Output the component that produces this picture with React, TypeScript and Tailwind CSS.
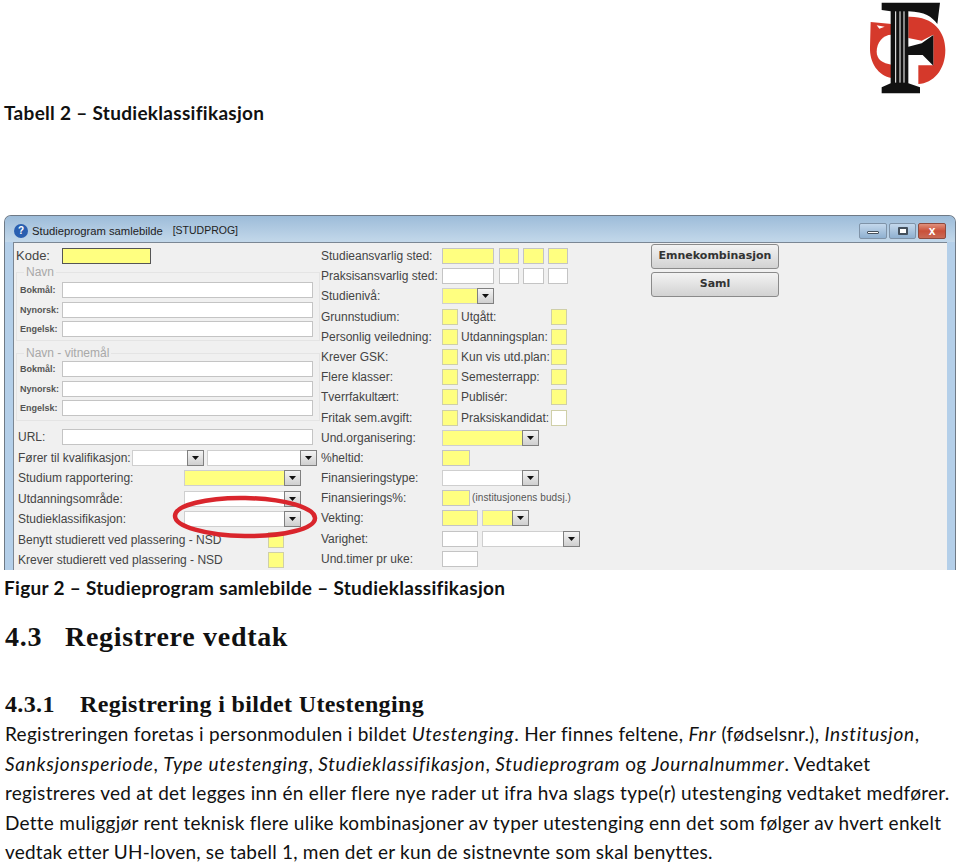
const label = "font-['Liberation_Sans',Arial,sans-serif] text-[12px] leading-4 text-[#444] whitespace-nowrap";
const small = "font-['Liberation_Sans',Arial,sans-serif] text-[9px] font-bold leading-4 text-[#555] whitespace-nowrap";

function Field({ w, yellow }: { w: string; yellow?: boolean }) {
  return <div className={`h-full shrink-0 border border-[#c4c4c4] ${w} ${yellow ? "bg-[#ffff80]" : "bg-white"}`} />;
}

function Check({ yellow = true }: { yellow?: boolean }) {
  return <div className={`h-full w-4 shrink-0 border border-[#cfcfa8] ${yellow ? "bg-[#ffff80]" : "bg-white"}`} />;
}

function Combo({ w, yellow }: { w: string; yellow?: boolean }) {
  return (
    <div className={`flex h-full shrink-0 ${w} ${yellow ? "bg-[#ffff80]" : "bg-white"} border border-[#cfcfcf]`}>
      <div className="flex-1" />
      <div className="-m-px flex w-[17px] items-center justify-center border border-[#808080] bg-gradient-to-b from-[#f4f4f4] to-[#cfcfcf]">
        <svg width="7" height="4" viewBox="0 0 7 4"><path d="M0 0h7L3.5 4z" fill="#111" /></svg>
      </div>
    </div>
  );
}

function Row({ name, children, w }: { name: string; children?: React.ReactNode; w: string }) {
  return (
    <div className="flex h-4 items-center">
      <div className={`${w} shrink-0 ${label}`}>{name}</div>
      {children}
    </div>
  );
}

function NameRow({ name }: { name: string }) {
  return (
    <div className="flex h-4">
      <div className={`w-[42px] shrink-0 ${small}`}>{name}</div>
      <Field w="w-[251px]" />
    </div>
  );
}

function Group({ title, className, children }: { title: string; className: string; children: React.ReactNode }) {
  return (
    <div className={`relative ml-[2px] w-[304px] border border-[#e4e4e4] pl-[3px] ${className}`}>
      <div className="absolute -top-[9px] left-[7px] bg-[#f0f0f0] px-[2px] font-['Liberation_Sans',Arial,sans-serif] text-[12px] leading-4 text-[#a8a8a8]">
        {title}
      </div>
      <div className="flex flex-col gap-[3.5px]">{children}</div>
    </div>
  );
}

function LeftColumn() {
  return (
    <div className="flex w-[306px] shrink-0 flex-col pt-[5px]">
      <div className="flex h-4 pl-[2px]">
        <div className="w-[46px] shrink-0 font-['Liberation_Sans',Arial,sans-serif] text-[13px] leading-4 text-[#444]">Kode:</div>
        <div className="h-full w-[89px] border border-[#555] bg-[#ffff80]" />
      </div>
      <Group title="Navn" className="mt-2 h-[69px] pt-[9px]">
        <NameRow name="Bokmål:" />
        <NameRow name="Nynorsk:" />
        <NameRow name="Engelsk:" />
      </Group>
      <Group title="Navn - vitnemål" className="mt-3 h-[68px] pt-[7px]">
        <NameRow name="Bokmål:" />
        <NameRow name="Nynorsk:" />
        <NameRow name="Engelsk:" />
      </Group>
      <div className="mt-2 flex h-4 pl-1">
        <div className={`w-[44px] shrink-0 ${label}`}>URL:</div>
        <Field w="w-[251px]" />
      </div>
      <div className="mt-[5px] flex flex-col gap-[4.4px] pl-1">
        <Row name="Fører til kvalifikasjon:" w="w-[114px]">
          <Combo w="w-[72px]" />
          <div className="w-[3px]" />
          <Combo w="w-[110px]" />
        </Row>
        <Row name="Studium rapportering:" w="w-[166px]"><Combo w="w-[117px]" yellow /></Row>
        <Row name="Utdanningsområde:" w="w-[166px]"><Combo w="w-[117px]" /></Row>
        <Row name="Studieklassifikasjon:" w="w-[166px]"><Combo w="w-[117px]" /></Row>
        <Row name="Benytt studierett ved plassering - NSD" w="w-[250px]"><Check /></Row>
        <Row name="Krever studierett ved plassering - NSD" w="w-[250px]"><Check /></Row>
      </div>
    </div>
  );
}

function CheckPair({ a, b, yellowB = true }: { a: string; b: string; yellowB?: boolean }) {
  return (
    <Row name={a} w="w-[121px]">
      <Check />
      <div className={`ml-[3px] w-[90px] shrink-0 ${label}`}>{b}</div>
      <Check yellow={yellowB} />
    </Row>
  );
}

function MiddleColumn() {
  return (
    <div className="flex w-[331px] shrink-0 flex-col gap-[4.2px] pl-[1px] pt-[5px]">
      <Row name="Studieansvarlig sted:" w="w-[121px]">
        <Field w="w-[52px]" yellow />
        <div className="w-[5px]" />
        <Field w="w-[20px]" yellow />
        <div className="w-[4px]" />
        <Field w="w-[21px]" yellow />
        <div className="w-[4px]" />
        <Field w="w-[20px]" yellow />
      </Row>
      <Row name="Praksisansvarlig sted:" w="w-[121px]">
        <Field w="w-[52px]" />
        <div className="w-[5px]" />
        <Field w="w-[20px]" />
        <div className="w-[4px]" />
        <Field w="w-[21px]" />
        <div className="w-[4px]" />
        <Field w="w-[20px]" />
      </Row>
      <Row name="Studienivå:" w="w-[121px]"><Combo w="w-[52px]" yellow /></Row>
      <CheckPair a="Grunnstudium:" b="Utgått:" />
      <CheckPair a="Personlig veiledning:" b="Utdanningsplan:" />
      <CheckPair a="Krever GSK:" b="Kun vis utd.plan:" />
      <CheckPair a="Flere klasser:" b="Semesterrapp:" />
      <CheckPair a="Tverrfakultært:" b="Publisér:" />
      <CheckPair a="Fritak sem.avgift:" b="Praksiskandidat:" yellowB={false} />
      <Row name="Und.organisering:" w="w-[121px]"><Combo w="w-[97px]" yellow /></Row>
      <Row name="%heltid:" w="w-[121px]"><Field w="w-[28px]" yellow /></Row>
      <Row name="Finansieringstype:" w="w-[121px]"><Combo w="w-[97px]" /></Row>
      <Row name="Finansierings%:" w="w-[121px]">
        <Field w="w-[28px]" yellow />
        <span className="ml-[2px] whitespace-nowrap font-['Liberation_Sans',Arial,sans-serif] text-[10px] leading-4 tracking-[0.1px] text-[#555]">(institusjonens budsj.)</span>
      </Row>
      <Row name="Vekting:" w="w-[121px]">
        <Field w="w-[36px]" yellow />
        <div className="w-[4px]" />
        <Combo w="w-[47px]" yellow />
      </Row>
      <Row name="Varighet:" w="w-[121px]">
        <Field w="w-[36px]" />
        <div className="w-[4px]" />
        <Combo w="w-[98px]" />
      </Row>
      <Row name="Und.timer pr uke:" w="w-[121px]"><Field w="w-[36px]" /></Row>
    </div>
  );
}

function WinButton({ children, className }: { children: React.ReactNode; className: string }) {
  return (
    <div className={`flex h-4 items-center justify-center rounded-[2px] border border-[#7f93a8] ${className}`}>
      {children}
    </div>
  );
}

function StudyWindow() {
  return (
    <div className="relative mx-1 flex h-[355px] w-[952px] flex-col overflow-hidden rounded-t-[7px] border-l border-r border-t border-[#6f7a86] bg-[#b4cfe9]">
      <div className="flex h-[26px] shrink-0 items-center bg-gradient-to-b from-[#9dbcd9] to-[#c3d8ea] pl-[9px] pr-[9px] pt-[3px]">
        <div className="flex h-[14px] w-[14px] items-center justify-center rounded-full bg-[#2a5fb0] font-['Liberation_Sans',Arial,sans-serif] text-[10px] font-bold text-white">
          ?
        </div>
        <span className="ml-[4px] pt-[1px] font-['Liberation_Sans',Arial,sans-serif] text-[11.25px] text-[#222]">Studieprogram samlebilde</span>
        <span className="ml-[10px] pt-[1px] font-['Liberation_Sans',Arial,sans-serif] text-[10.5px] text-[#222]">[STUDPROG]</span>
        <div className="ml-auto flex gap-[2px]">
          <WinButton className="w-[28px] bg-gradient-to-b from-[#c4d8ec] to-[#8fb0d0]">
            <div className="mt-[4px] h-[3px] w-[12px] rounded-[1px] border border-[#44505c] bg-white" />
          </WinButton>
          <WinButton className="w-[27px] bg-gradient-to-b from-[#c4d8ec] to-[#8fb0d0]">
            <div className="h-[8px] w-[10px] rounded-[1px] border-2 border-[#44505c] bg-white" />
          </WinButton>
          <WinButton className="w-[28px] border-[#8d4a3e] bg-gradient-to-b from-[#e0907c] via-[#c9503a] to-[#c96a55]">
            <span className="font-['Liberation_Sans',Arial,sans-serif] text-[12px] font-bold leading-none text-white">x</span>
          </WinButton>
        </div>
      </div>
      <div className="ml-[8px] mr-[8px] flex min-h-0 flex-1 border-l border-t border-[#7b8794] bg-[#f0f0f0]">
        <LeftColumn />
        <MiddleColumn />
        <div className="flex w-[128px] shrink-0 flex-col gap-[3px] pt-[1px]">
          {["Emnekombinasjon", "Saml"].map((t) => (
            <div
              key={t}
              className="flex h-[25px] items-center justify-center rounded-[3px] border border-[#8a8a8a] bg-gradient-to-b from-[#f3f3f3] to-[#d2d2d2] font-['DejaVu_Sans',sans-serif] text-[11px] font-bold text-[#333]"
            >
              {t}
            </div>
          ))}
        </div>
      </div>
      <svg className="absolute left-[167px] top-[278px]" width="146" height="46" viewBox="0 0 146 46">
        <ellipse cx="73" cy="23" rx="70" ry="19" transform="rotate(1 73 23)" fill="none" stroke="#d9252c" strokeWidth="4.5" />
      </svg>
    </div>
  );
}

function Logo() {
  return (
    <svg width="110" height="100" viewBox="0 0 330 300">
      <path d="M62 66 L125 72 L125 234 C85 226 58 190 60 140 Z" fill="#d5392b" />
      <path d="M125 104 C98 104 80 128 80 155 C80 178 98 190 125 194 Z" fill="#fff" />
      <path d="M80 76 L104 80 L88 86 Z" fill="#fff" />
      <path d="M175 50 C250 48 286 95 286 150 C286 210 250 250 205 252 L205 196 L250 196 L250 104 L215 122 L175 114 Z" fill="#d5392b" />
      <path d="M95 8 H270 L262 72 C245 50 225 36 175 34 V140 L215 130 L250 105 V197 L218 165 H175 V250 L210 262 V280 H95 V262 L122 250 V34 L95 30 Z" fill="#111" />
      <path d="M137 34 V248 M150 34 V248 M162 34 V248" stroke="#fff" strokeWidth="3" />
    </svg>
  );
}

const body = "font-['Lato',sans-serif] text-[19px] leading-[29.5px] tracking-[0.28px] text-[#111] whitespace-nowrap";
const em = "italic tracking-[0.73px]";

export default function App() {
  return (
    <div className="h-[866px] w-[960px] overflow-hidden bg-white">
      <div className="flex h-[100px] justify-end">
        <Logo />
      </div>
      <div className="flex h-[115px] items-start pl-1 pt-[1px] font-['Lato',sans-serif] text-[19px] font-bold leading-6 tracking-[0.3px] text-[#111]">
        Tabell 2 – Studieklassifikasjon
      </div>
      <StudyWindow />
      <div className="pl-1 pt-[6px] font-['Lato',sans-serif] text-[19px] font-bold leading-6 tracking-[0.3px] text-[#111]">
        Figur 2 – Studieprogram samlebilde – Studieklassifikasjon
      </div>
      <div className="flex pl-[5px] pt-[21px] font-['Liberation_Serif',serif] text-[28px] font-bold leading-8 tracking-[0.7px] text-[#111]">
        <span className="w-[60px]">4.3</span>
        <span>Registrere vedtak</span>
      </div>
      <div className="flex pl-[5px] pt-[37px] font-['Liberation_Serif',serif] text-[24px] font-bold leading-7 tracking-[0.36px] text-[#111]">
        <span className="w-[75px]">4.3.1</span>
        <span>Registrering i bildet Utestenging</span>
      </div>
      <div className={`pl-[5px] pt-[1px] ${body}`}>
        <div>Registreringen foretas i personmodulen i bildet <span className={em}>Utestenging</span>. Her finnes feltene, <span className={em}>Fnr</span> (fødselsnr.), <span className={em}>Institusjon</span>,</div>
        <div><span className={em}>Sanksjonsperiode</span>, <span className={em}>Type utestenging</span>, <span className={em}>Studieklassifikasjon</span>, <span className={em}>Studieprogram</span> og <span className={em}>Journalnummer</span>. Vedtaket</div>
        <div>registreres ved at det legges inn én eller flere nye rader ut ifra hva slags type(r) utestenging vedtaket medfører.</div>
        <div className="tracking-[0.25px]">Dette muliggjør rent teknisk flere ulike kombinasjoner av typer utestenging enn det som følger av hvert enkelt</div>
        <div className="tracking-[0.22px]">vedtak etter UH-loven, se tabell 1, men det er kun de sistnevnte som skal benyttes.</div>
      </div>
    </div>
  );
}
